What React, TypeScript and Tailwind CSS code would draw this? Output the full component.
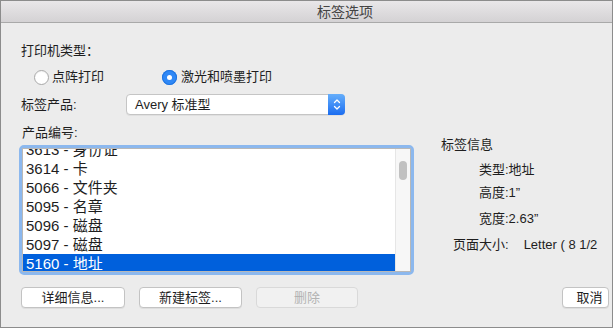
const rows = [
  "3613 - 身份证",
  "3614 - 卡",
  "5066 - 文件夹",
  "5095 - 名章",
  "5096 - 磁盘",
  "5097 - 磁盘",
  "5160 - 地址",
];

function Radio({ checked }: { checked?: boolean }) {
  if (checked) {
    return (
      <span className="flex h-[15px] w-[15px] items-center justify-center rounded-full bg-[#2f88f6] shadow-[inset_0_0_0_1px_#1f74e0]">
        <span className="h-[5px] w-[5px] rounded-full bg-white" />
      </span>
    );
  }
  return (
    <span className="h-[15px] w-[15px] rounded-full border border-[#a8a8a8] bg-white shadow-[inset_0_1px_1px_rgba(0,0,0,0.05)]" />
  );
}

function Button({
  label,
  className = "",
  disabled,
}: {
  label: string;
  className?: string;
  disabled?: boolean;
}) {
  return (
    <div
      className={`flex h-[21px] items-center justify-center rounded-[4px] border text-[13px] leading-[16px] ${
        disabled
          ? "border-[#d9d9d9] bg-[#f1f1f1] text-[#b3b3b3]"
          : "border-[#c3c3c3] bg-white text-[#1e1e1e] shadow-[0_1px_0_rgba(0,0,0,0.06)]"
      } ${className}`}
    >
      {label}
    </div>
  );
}

export default function App() {
  return (
    <div
      className="flex h-[328px] w-[613px] flex-col overflow-hidden border border-[#8c8c8c] bg-[#ececec] text-[#1e1e1e]"
      style={{ fontFamily: '"Liberation Sans", "Noto Sans CJK SC", sans-serif' }}
    >
      {/* Title bar */}
      <div className="flex h-[22px] shrink-0 items-center border-b border-[#a9a9a9] bg-gradient-to-b from-[#e9e7e9] to-[#d4d2d4] pl-[316px] text-[14px] leading-[16px] text-[#444]">
        标签选项
      </div>

      <div className="flex flex-1 flex-col pl-[20px] pt-[20px]">
        <div className="text-[13px] leading-[16px]">打印机类型：</div>

        {/* Printer type radios */}
        <div className="mt-[10px] flex h-[16px] items-center pl-[13px] text-[13px]">
          <Radio />
          <span className="ml-[3px] w-[110px]">点阵打印</span>
          <Radio checked />
          <span className="ml-[4px]">激光和喷墨打印</span>
        </div>

        {/* Label product select */}
        <div className="mt-[9px] flex h-[21px] items-center">
          <span className="w-[105px] text-[13px] leading-[16px]">标签产品:</span>
          <div className="flex h-[21px] w-[219px] items-stretch rounded-[4px] border border-[#c5c5c5] bg-white shadow-[0_1px_0_rgba(0,0,0,0.05)]">
            <span className="flex flex-1 items-center pl-[8px] text-[13px]">Avery 标准型</span>
            <span className="-m-px flex w-[17px] items-center justify-center rounded-r-[4px] bg-gradient-to-b from-[#65aefb] to-[#1a6cf0]">
              <svg width="8" height="13" viewBox="0 0 8 13" fill="none" stroke="white" strokeWidth="1.3" strokeLinecap="round" strokeLinejoin="round">
                <path d="M1.5 4.5 L4 2 L6.5 4.5" />
                <path d="M1.5 8.5 L4 11 L6.5 8.5" />
              </svg>
            </span>
          </div>
        </div>

        {/* Product numbers and info */}
        <div className="mt-[10px] flex">
          <div className="flex flex-col">
            <div className="pl-[1px] text-[13px] leading-[16px]">产品编号:</div>
            <div className="-ml-[2px] mt-[4px] h-[130px] w-[395px] rounded-[5px] border-[3px] border-[#8cb8ee]">
              <div className="flex h-full border border-[#b8b8b8] bg-white">
                <div className="flex-1 overflow-hidden">
                  <div className="-mt-[9px] flex flex-col">
                    {rows.map((r, i) => (
                      <div
                        key={r}
                        className={`h-[19px] pl-[3px] text-[15px] leading-[19px] ${
                          i === rows.length - 1 ? "bg-[#0060dc] text-white" : ""
                        }`}
                      >
                        {r}
                      </div>
                    ))}
                  </div>
                </div>
                <div className="w-[15px] border-l border-[#e6e6e6] bg-[#f7f7f7] pl-[3px] pt-[12px]">
                  <div className="h-[19px] w-[8px] rounded-full bg-[#c1c1c1]" />
                </div>
              </div>
            </div>
          </div>

          {/* Label info */}
          <div className="ml-[27px] flex flex-col pt-[12px] text-[13px] leading-[16px] whitespace-nowrap">
            <div>标签信息</div>
            <div className="ml-[38px] mt-[9px]">类型:地址</div>
            <div className="ml-[38px] mt-[7px]">高度:1”</div>
            <div className="ml-[38px] mt-[10px]">宽度:2.63”</div>
            <div className="ml-[12px] mt-[10px] flex">
              <span>页面大小:</span>
              <span className="ml-[15px]">Letter ( 8 1/2</span>
            </div>
          </div>
        </div>

        {/* Buttons */}
        <div className="mt-[12px] flex items-center">
          <Button label="详细信息..." className="w-[104px]" />
          <Button label="新建标签..." className="ml-[14px] w-[103px]" />
          <Button label="删除" className="ml-[14px] w-[102px]" disabled />
          <Button label="取消" className="ml-auto mr-[3px] w-[47px] pl-[8px]" />
        </div>
      </div>
    </div>
  );
}
